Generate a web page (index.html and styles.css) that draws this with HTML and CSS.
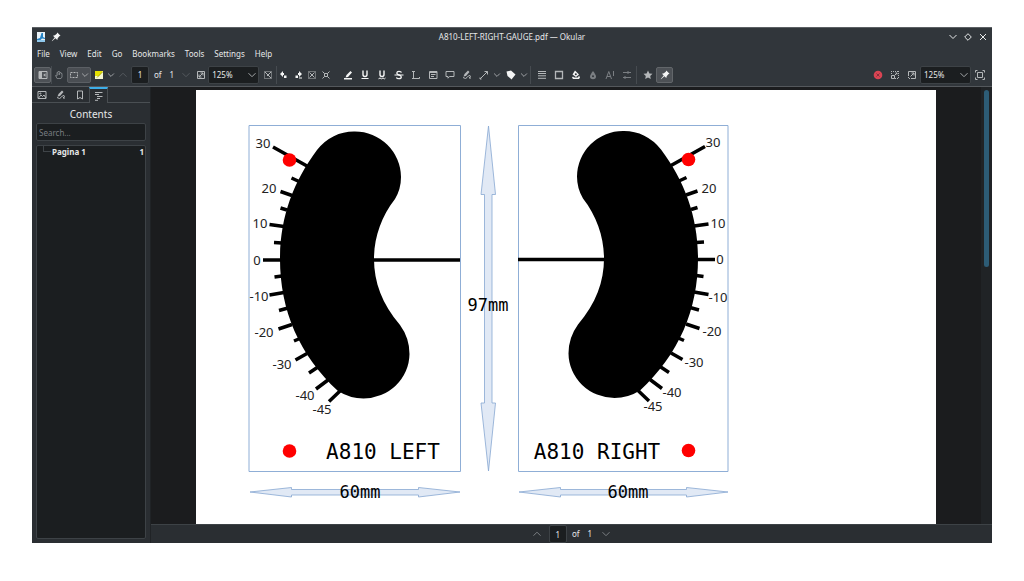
FILE: index.html
```
<!DOCTYPE html>
<html lang="en">
<head>
<meta charset="utf-8">
<title>A810-LEFT-RIGHT-GAUGE.pdf — Okular</title>
<link rel="stylesheet" href="styles.css">
</head>
<body>
<svg class="defs" aria-hidden="true">
  <symbol id="down" viewBox="0 0 12 12"><path d="M2.5 4.2 6 7.7l3.500-3.500"/></symbol>
  <symbol id="up" viewBox="0 0 12 12"><path d="M2.500 7.700 6 4.200l3.500 3.500"/></symbol>
  <symbol id="pin" viewBox="0 0 12 12"><path class="solid" d="M7.300 1.500 10.500 4.700 9.300 5.200 7.700 7.200 7.300 9 5.400 7.300 2 10.200 1.800 10 4.700 6.600 3 4.700 4.900 4.300 6.800 2.700z"/></symbol>
</svg>
<div class="window">
  <header class="titlebar">
    <div class="title-side">
      <svg viewBox="0 0 12 12"><path fill="#e8f2f8" d="M2 1h8v10H2z"/><path fill="#2684c6" d="M6.500 2H8v4l2 1v1L7 7.500 5 9.500 2 9V8l3-1z"/><path fill="#8fc8ec" d="M2 9h8v2H2z"/></svg>
      <svg class="bright" viewBox="0 0 12 12"><use href="#pin"/></svg>
    </div>
    <h1 class="title">A810-LEFT-RIGHT-GAUGE.pdf — Okular</h1>
    <div class="title-side title-end">
      <button class="winbtn" aria-label="Minimize"><svg viewBox="0 0 12 12"><path d="M2.500 4 6 7.500 9.500 4"/></svg></button>
      <button class="winbtn" aria-label="Maximize"><svg viewBox="0 0 12 12"><path d="M6 2.700 9.300 6 6 9.300 2.700 6z"/></svg></button>
      <button class="winbtn" aria-label="Close"><svg viewBox="0 0 12 12"><path d="m3 3 6 6M9 3 3 9"/></svg></button>
    </div>
  </header>
  <nav class="menubar">
    <button>File</button><button>View</button><button>Edit</button><button>Go</button><button>Bookmarks</button><button>Tools</button><button>Settings</button><button>Help</button>
  </nav>
  <div class="toolbar">
    <button class="tool active" aria-label="Show sidebar"><svg viewBox="0 0 12 12"><path d="M2 2.500h8v7H2z"/><path class="solid" d="M2 2.500h3v7H2zM6.200 6 8.500 4.200v3.600z"/></svg></button>
    <span class="sep"></span>
    <button class="tool narrow dim" aria-label="Browse"><svg viewBox="0 0 12 12"><path d="M4 9.500 2.500 6.500 4 7V3.500h1V2.500h1.500v1H8v1h1V8L8 9.500zM5 4v2M6.500 4v2"/></svg></button>
    <div class="split">
      <button class="tool narrow" aria-label="Selection"><svg viewBox="0 0 12 12"><path stroke-dasharray="2 1" d="M2.500 3.500h7v5h-7z"/></svg></button>
      <button class="tool slim" aria-label="Selection options"><svg viewBox="0 0 12 12"><use href="#down"/></svg></button>
    </div>
    <button class="tool narrow" aria-label="Quick annotations"><svg viewBox="0 0 12 12"><path fill="#f4f6d0" stroke="none" d="M2 2h8v8H2z"/><path fill="#e4e000" stroke="none" d="M2 2h8L6 7H2z"/><path stroke="#a8a600" d="M4 8.500 9.500 3"/></svg></button>
    <button class="tool slim" aria-label="Annotation options"><svg viewBox="0 0 12 12"><use href="#down"/></svg></button>
    <button class="tool narrow faint" aria-label="Previous page"><svg viewBox="0 0 12 12"><use href="#up"/></svg></button>
    <label class="pages"><input class="pagebox" aria-label="Page" value="1"><span>of</span><span class="total">1</span></label>
    <button class="tool faint" aria-label="Next page"><svg viewBox="0 0 12 12"><use href="#down"/></svg></button>
    <button class="tool narrow" aria-label="Zoom mode"><svg viewBox="0 0 12 12"><path d="M2.500 2.500h7v7h-7zM4 8l4-4M5.500 4H8v2.500M4 5.500V8h2.500"/></svg></button>
    <span class="combo"><select aria-label="Zoom"><option>125%</option></select><svg viewBox="0 0 12 12"><use href="#down"/></svg></span>
    <button class="tool" aria-label="Fit page"><svg viewBox="0 0 12 12"><path stroke-dasharray="1 1" d="M2.500 2.500h7v7h-7z"/><path d="m3 3 6 6M5 7l4-4"/></svg></button>
    <span class="sep"></span>
    <button class="tool narrow bright" aria-label="Rotate left"><svg viewBox="0 0 12 12"><path class="solid" d="M2 5 5 2v2h1v2H5v2zM6 6.500h2.500V9H6z"/></svg></button>
    <button class="tool narrow bright" aria-label="Rotate right"><svg viewBox="0 0 12 12"><path class="solid" d="M10 5 7 2v2H6v2h1v2zM3.500 6.500H6V9H3.500zM7 8.500h3v1H7z"/></svg></button>
    <button class="tool narrow" aria-label="Trim margins"><svg viewBox="0 0 12 12"><path stroke-dasharray="1 1" d="M2.500 2.500h7v7h-7z"/><path d="m3.500 3.500 5 5M8.500 3.500l-5 5"/></svg></button>
    <button class="tool narrow" aria-label="Trim to selection"><svg viewBox="0 0 12 12"><path d="m2.500 2.500 2 2h3l2-2M2.500 9.500l2-2h3l2 2M4.500 4.500v3M7.500 4.500v3"/></svg></button>
    <span class="space"></span>
    <button class="tool bright" aria-label="Highlighter"><svg viewBox="0 0 12 12"><path class="solid" d="M8.500 2 10 3.500 6 8 3.500 8.500 4.500 6zM2 9h8v1.500H2z"/></svg></button>
    <button class="tool bright" aria-label="Underline"><svg viewBox="0 0 12 12"><path stroke-width="1.400" d="M4 1.500v4q0 2 2 2t2-2v-4"/><path d="M2.500 9.500h7"/></svg></button>
    <button class="tool bright" aria-label="Squiggle"><svg viewBox="0 0 12 12"><path stroke-width="1.400" d="M4 1.500v4q0 2 2 2t2-2v-4"/><path d="M2.500 9.800l1.500-.8 1.500.8L7 9l1.500.8 1-.8"/></svg></button>
    <button class="tool bright" aria-label="Strike out"><svg viewBox="0 0 12 12"><path stroke-width="1.300" d="M8.500 3.500Q8 2.300 6 2.300T3.800 4Q3.800 5.500 6 6t2.300 2q0 1.700-2.300 1.700T3.500 8.300"/><path d="M1.500 6h9"/></svg></button>
    <button class="tool" aria-label="Typewriter"><svg viewBox="0 0 12 12"><path d="M2 2.500h3M3.500 2.500v7M2 9.500h7.500V8"/></svg></button>
    <button class="tool" aria-label="Inline note"><svg viewBox="0 0 12 12"><path d="M2.500 2.500h7.500v7H2.500zM2.500 3.500H10M4 5.500h4.500M4 7.500h3"/></svg></button>
    <button class="tool" aria-label="Pop-up note"><svg viewBox="0 0 12 12"><path d="M2 2.500h8v5H5.500L4 9.200V7.500H2z"/></svg></button>
    <button class="tool" aria-label="Freehand line"><svg viewBox="0 0 12 12"><path class="solid" d="M7 1.500 8.500 3 5 7 2.500 7.500 3.500 5z"/><path d="M2 8.500q3 2 4 0t3-2q1.500 1-1 2.500h2"/></svg></button>
    <button class="tool" aria-label="Arrow"><svg viewBox="0 0 12 12"><path d="M2 10 9.500 2.500M6.500 2.500h3v3M2 8.500v1.500h1.500"/></svg></button>
    <button class="tool slim" aria-label="Line options"><svg viewBox="0 0 12 12"><use href="#down"/></svg></button>
    <button class="tool bright" aria-label="Stamp"><svg viewBox="0 0 12 12"><path class="solid" d="M1.500 2.500 6 1.500 10.500 5.500 6.500 10.500 5 9 2.500 7z"/></svg></button>
    <button class="tool slim" aria-label="Stamp options"><svg viewBox="0 0 12 12"><use href="#down"/></svg></button>
    <span class="sep wide"></span>
    <button class="tool" aria-label="Line width"><svg viewBox="0 0 12 12"><path d="M2 2.500h8M2 4.500h8M2 6.800h8M2 9.300h8"/></svg></button>
    <button class="tool" aria-label="Color"><svg viewBox="0 0 12 12"><path stroke-width="1.300" d="M2.500 2.500h7v7h-7z"/></svg></button>
    <button class="tool bright" aria-label="Fill color"><svg viewBox="0 0 12 12"><path class="solid" d="M5 1.500 9 5.500 6 8 2.500 5.500zM2 8.500 3 7.500l1 1h4l1-2 1 2-1 1.500H3z"/><circle cx="5.800" cy="5.200" r="1" fill="#31363b" stroke="none"/></svg></button>
    <button class="tool dim" aria-label="Opacity"><svg viewBox="0 0 12 12"><path class="solid" d="M6 2q3 4 3 5.500a3 2.800 0 0 1-6 0Q3 6 6 2z"/><circle cx="6" cy="7.300" r="1" fill="#31363b" stroke="none"/></svg></button>
    <button class="tool dim" aria-label="Font"><svg viewBox="0 0 12 12"><path d="m2 10 2.800-7.500L7.500 10M3 7.500h3.500M9.500 2v5"/></svg></button>
    <button class="tool dim" aria-label="Annotation settings"><svg viewBox="0 0 12 12"><path d="M2 3.500h8M7 2v3M2 8.500h8M4 7v3"/></svg></button>
    <span class="sep wide"></span>
    <button class="tool" aria-label="Add to quick annotations"><svg viewBox="0 0 12 12"><path class="solid" d="m6 1.500 1.400 2.900 3.100.4-2.300 2.100.6 3.200L6 8.600l-2.800 1.500.6-3.200-2.300-2.100 3.100-.4z"/></svg></button>
    <button class="tool active bright" aria-label="Keep active"><svg viewBox="0 0 12 12"><use href="#pin"/></svg></button>
    <span class="grow"></span>
    <button class="tool" aria-label="Hide annotation bar"><svg viewBox="0 0 12 12"><circle cx="6" cy="6" r="4.300" fill="#da4453" stroke="none"/><path stroke="#852f3a" d="m4.500 4.500 3 3M7.500 4.500l-3 3"/></svg></button>
    <button class="tool" aria-label="Zoom out"><svg viewBox="0 0 12 12"><path stroke-dasharray="1 1" d="M2.500 2v4M2 2.500h8M9.500 2v8M6 9.500h4"/><path d="M2.500 6.500h3v3h-3zM6 6l2-2M6.500 4H8v1.500"/></svg></button>
    <button class="tool" aria-label="Zoom in"><svg viewBox="0 0 12 12"><path d="M2.500 6V2.500h7v7H6"/><path stroke-dasharray="1 1" d="M2.500 6v3.500H6"/><path d="M4.500 7.500 8 4M5.500 4H8v2.500"/></svg></button>
    <span class="combo"><select aria-label="Zoom level"><option>125%</option></select><svg viewBox="0 0 12 12"><use href="#down"/></svg></span>
    <button class="tool" aria-label="Fit selection"><svg viewBox="0 0 12 12"><path d="M3.500 3.500h5v5h-5zM1.500 3.500v-2h2M8.500 1.500h2v2M10.500 8.500v2h-2M3.500 10.500h-2v-2"/></svg></button>
  </div>
  <div class="content">
    <aside class="sidebar">
      <div class="tabs">
        <button class="tab" aria-label="Thumbnails"><svg viewBox="0 0 12 12"><path d="M2 2.500h8v7H2zM2.500 9 5 6l1.500 1.500L8 6l2 3"/><circle cx="4.300" cy="4.500" r=".6"/></svg></button>
        <button class="tab" aria-label="Annotations"><svg viewBox="0 0 12 12"><path class="solid" d="M7 1.500 8.500 3 5 7 2.500 7.500 3.500 5z"/><path d="M2 8.500q3 2 4 0t3-2q1.500 1-1 2.500h2"/></svg></button>
        <button class="tab" aria-label="Bookmarks"><svg viewBox="0 0 12 12"><path d="M3.500 2h5v8L6 8.500 3.500 10z"/></svg></button>
        <button class="tab selected" aria-label="Contents"><svg viewBox="0 0 12 12"><path d="M2 2.500h7.500M2 4.500h4M4 6.500h5.500M4 8.500h3M2 10.300h3"/></svg></button>
      </div>
      <h2 class="panel-title">Contents</h2>
      <input class="search" type="search" aria-label="Search" placeholder="Search...">
      <div class="tree"><a class="row" href="#page"><span class="branch"></span><span class="name">Pagina 1</span><span>1</span></a></div>
    </aside>
    <main class="main">
      <div class="viewport">
        <div class="canvas" id="page">
          <svg class="drawing" viewBox="196 90 740 434" role="img" aria-label="A810 left and right gauge">
            <defs>
              <g id="gauge">
                <path d="M280 259C280 218 293 182 317 150A46 46 0 0 1 355 131.500A46 46 0 0 1 401 177Q401 189 395 199C381 217 374 238 374 259C374 282 382 304 400 325Q409.500 338 409.500 354A46 45 0 0 1 363.500 398.500Q350 398.500 338 391C299 355 280 310 280 259z"/>
                <path class="ticks" d="M273 147 307 166M291.500 178 299 181.500M280.500 191.500 292 195.500M280.500 208 287 210M269.500 224.500 284 226.500M274 242.500 282 243M263 260H281M274.500 277 282 276M269.500 295 284 292.500M279 310.500 288 308M278.500 329 292 324.500M294 341 301 338M295.500 360 307 353.500M309 373 318 367M316 389 328 380M329 401.500 340 391M373 260H460"/>
                <circle cx="289.500" cy="160" r="6.800" fill="#f00"/>
                <circle cx="289.500" cy="451" r="6.800" fill="#f00"/>
              </g>
            </defs>
            <path class="frame" d="M249 125.500H460.500V471.500H249zM518.500 125.500H728V471.500H518.500z"/>
            <use href="#gauge"/>
            <use href="#gauge" transform="matrix(-1 0 0 1 978 -0.500)"/>
            <path class="arrow" d="M488.500 126 495.500 194.500H492V403H495.500L488.500 471 481 403H484.500V194.500H481z"/>
            <path class="arrow" d="M250 492 291.500 487.500V489.500H418.500V487.500L460 492 418.500 497V495H291.500V497z"/>
            <path class="arrow" d="M519 492 560.500 487.500V489.500H686.500V487.500L728 492 686.500 497V495H560.500V497z"/>
            <g class="nums">
              <text x="263" y="148">30</text><text x="269" y="193">20</text><text x="260" y="228">10</text><text x="257" y="265">0</text><text x="259" y="301">-10</text><text x="264" y="337">-20</text><text x="282" y="369">-30</text><text x="305" y="400">-40</text><text x="322" y="414">-45</text>
              <text x="713" y="147">30</text><text x="709" y="193">20</text><text x="718" y="228">10</text><text x="720" y="264">0</text><text x="718" y="302">-10</text><text x="712" y="336">-20</text><text x="694" y="367">-30</text><text x="672" y="397">-40</text><text x="653" y="411">-45</text>
            </g>
            <g class="labels"><text x="383" y="459">A810 LEFT</text><text x="597" y="459">A810 RIGHT</text></g>
            <g class="sizes"><text x="360" y="498">60mm</text><text x="628" y="498">60mm</text><text x="488" y="311">97mm</text></g>
          </svg>
        </div>
        <div class="scroll"><div class="thumb"></div></div>
      </div>
      <footer class="pager">
        <button class="tool dim" aria-label="Previous page"><svg viewBox="0 0 12 12"><use href="#up"/></svg></button>
        <label class="pages"><input class="pagebox" aria-label="Current page" value="1"><span>of</span><span class="total">1</span></label>
        <button class="tool dim" aria-label="Next page"><svg viewBox="0 0 12 12"><use href="#down"/></svg></button>
      </footer>
    </main>
  </div>
</div>
</body>
</html>
```
FILE: styles.css
```
* { box-sizing: border-box; }
body {
  margin: 0;
  padding: 27px 32px 38px;
  height: 100vh;
  background: #fff;
  color: #e6e8e9;
  font: 8px/12px "Noto Sans", sans-serif;
}
.defs { position: absolute; width: 0; height: 0; }
button, input, select { font: inherit; color: inherit; border: 0; background: none; padding: 0; margin: 0; }
svg { display: block; fill: none; stroke: currentColor; }
.solid { fill: currentColor; stroke: none; }
.window {
  height: 100%;
  display: flex;
  flex-direction: column;
  background: #31363b;
}
.titlebar { display: flex; align-items: center; height: 18px; border-top: 1px solid #5c6064; }
.title { margin: 0; font-size: 8px; font-weight: 400; }
.title-side { flex: 1; display: flex; align-items: center; gap: 3px; padding: 0 3px; }
.title-side svg { width: 12px; height: 12px; stroke: none; }
.title-end { justify-content: flex-end; }
.title-end .winbtn svg { stroke: #e6e8e9; }
.menubar { display: flex; align-items: center; height: 18px; gap: 10px; padding: 0 5px; }
.toolbar {
  display: flex;
  align-items: center;
  height: 24px;
  padding: 0 4px 0 2px;
  border-bottom: 1px solid #54585c;
  color: #b4b7b9;
}
.tool {
  width: 17px;
  height: 16px;
  flex: none;
  display: flex;
  align-items: center;
  justify-content: center;
  border-radius: 2px;
}
.tool svg { width: 12px; height: 12px; }
.narrow { width: 14px; }
.slim { width: 10px; }
.active { background: #4d5156; border: 1px solid #62666a; }
.bright { color: #f4f5f5; }
.dim { color: #7b7f83; }
.faint { color: #54595e; }
.sep { width: 1px; height: 18px; background: #464b50; }
.wide { margin: 0 2px 0 1px; }
.split { display: flex; margin: 0 1px; background: #4a4e53; border: 1px solid #5b5f64; border-radius: 2px; }
.split .tool { height: 14px; }
.split .narrow { width: 12px; }
.space { width: 6px; }
.grow { flex: 1; }
.pages { display: flex; align-items: center; gap: 5px; margin: 0 3px 0 1px; color: #e6e8e9; }
.total { padding-left: 3px; }
.pagebox, .combo, .search, .tree { background: #1b1e20; border: 1px solid #3d4246; border-radius: 2px; }
.pagebox { width: 18px; height: 18px; text-align: center; }
.combo { display: grid; width: 51px; height: 18px; align-items: center; color: #e6e8e9; }
.combo > * { grid-area: 1 / 1; }
.combo select { appearance: none; width: 100%; padding-left: 3px; }
.combo svg { width: 12px; height: 12px; justify-self: end; pointer-events: none; color: #a4a7a9; }
.content { flex: 1; min-height: 0; display: flex; }
.sidebar { width: 119px; display: flex; flex-direction: column; padding: 0 4px 4px; background: #2a2e32; border-right: 1px solid #202326; }
.tabs { display: flex; margin: 0 -4px; height: 16px; border-bottom: 1px solid #4a4f53; color: #b4b7b9; }
.tab { width: 19px; height: 16px; display: flex; align-items: center; justify-content: center; }
.tab svg { width: 12px; height: 12px; }
.selected { border: 1px solid #4a4f53; border-top: 2px solid #3daee9; border-bottom: 0; background: #2a2e32; }
.panel-title { margin: 4px 0 2px; font-size: 10px; line-height: 14px; font-weight: 400; text-align: center; }
.search { height: 18px; margin-bottom: 4px; padding: 0 2px; appearance: none; }
.search::placeholder { color: #797d80; opacity: 1; }
.tree { flex: 1; }
.row { display: flex; align-items: center; padding: 0 1px 0 6px; color: inherit; text-decoration: none; font-weight: 700; }
.branch { width: 8px; height: 6px; align-self: flex-start; border: solid #3f4448; border-width: 0 0 1px 1px; }
.name { flex: 1; padding-left: 1px; }
.main { flex: 1; min-width: 0; display: flex; flex-direction: column; background: #1b1c1e; }
.viewport { flex: 1; min-height: 0; display: flex; }
.canvas { flex: 1; min-width: 0; display: flex; justify-content: center; padding-top: 3px; overflow: hidden; }
.drawing { width: 740px; height: 434px; flex: none; background: #fff; stroke: none; fill: #000; }
.ticks { stroke: #000; stroke-width: 3.5; }
.frame { fill: none; stroke: #8faed6; }
.arrow { fill: #e1e9f5; stroke: #87a7d2; stroke-width: 0.8; }
.drawing text { text-anchor: middle; }
.nums { font-size: 13px; fill: #222; }
.labels { font: 21px "DejaVu Sans Mono", monospace; }
.sizes { font: 17px "DejaVu Sans Mono", monospace; }
.scroll { width: 11px; padding: 3px; background: #202326; }
.thumb { height: 41%; width: 5px; border-radius: 3px; background: #2d5c76; }
.pager { height: 19px; display: flex; align-items: center; justify-content: center; gap: 2px; background: #2a2e32; border-top: 1px solid #3d4246; }
```
